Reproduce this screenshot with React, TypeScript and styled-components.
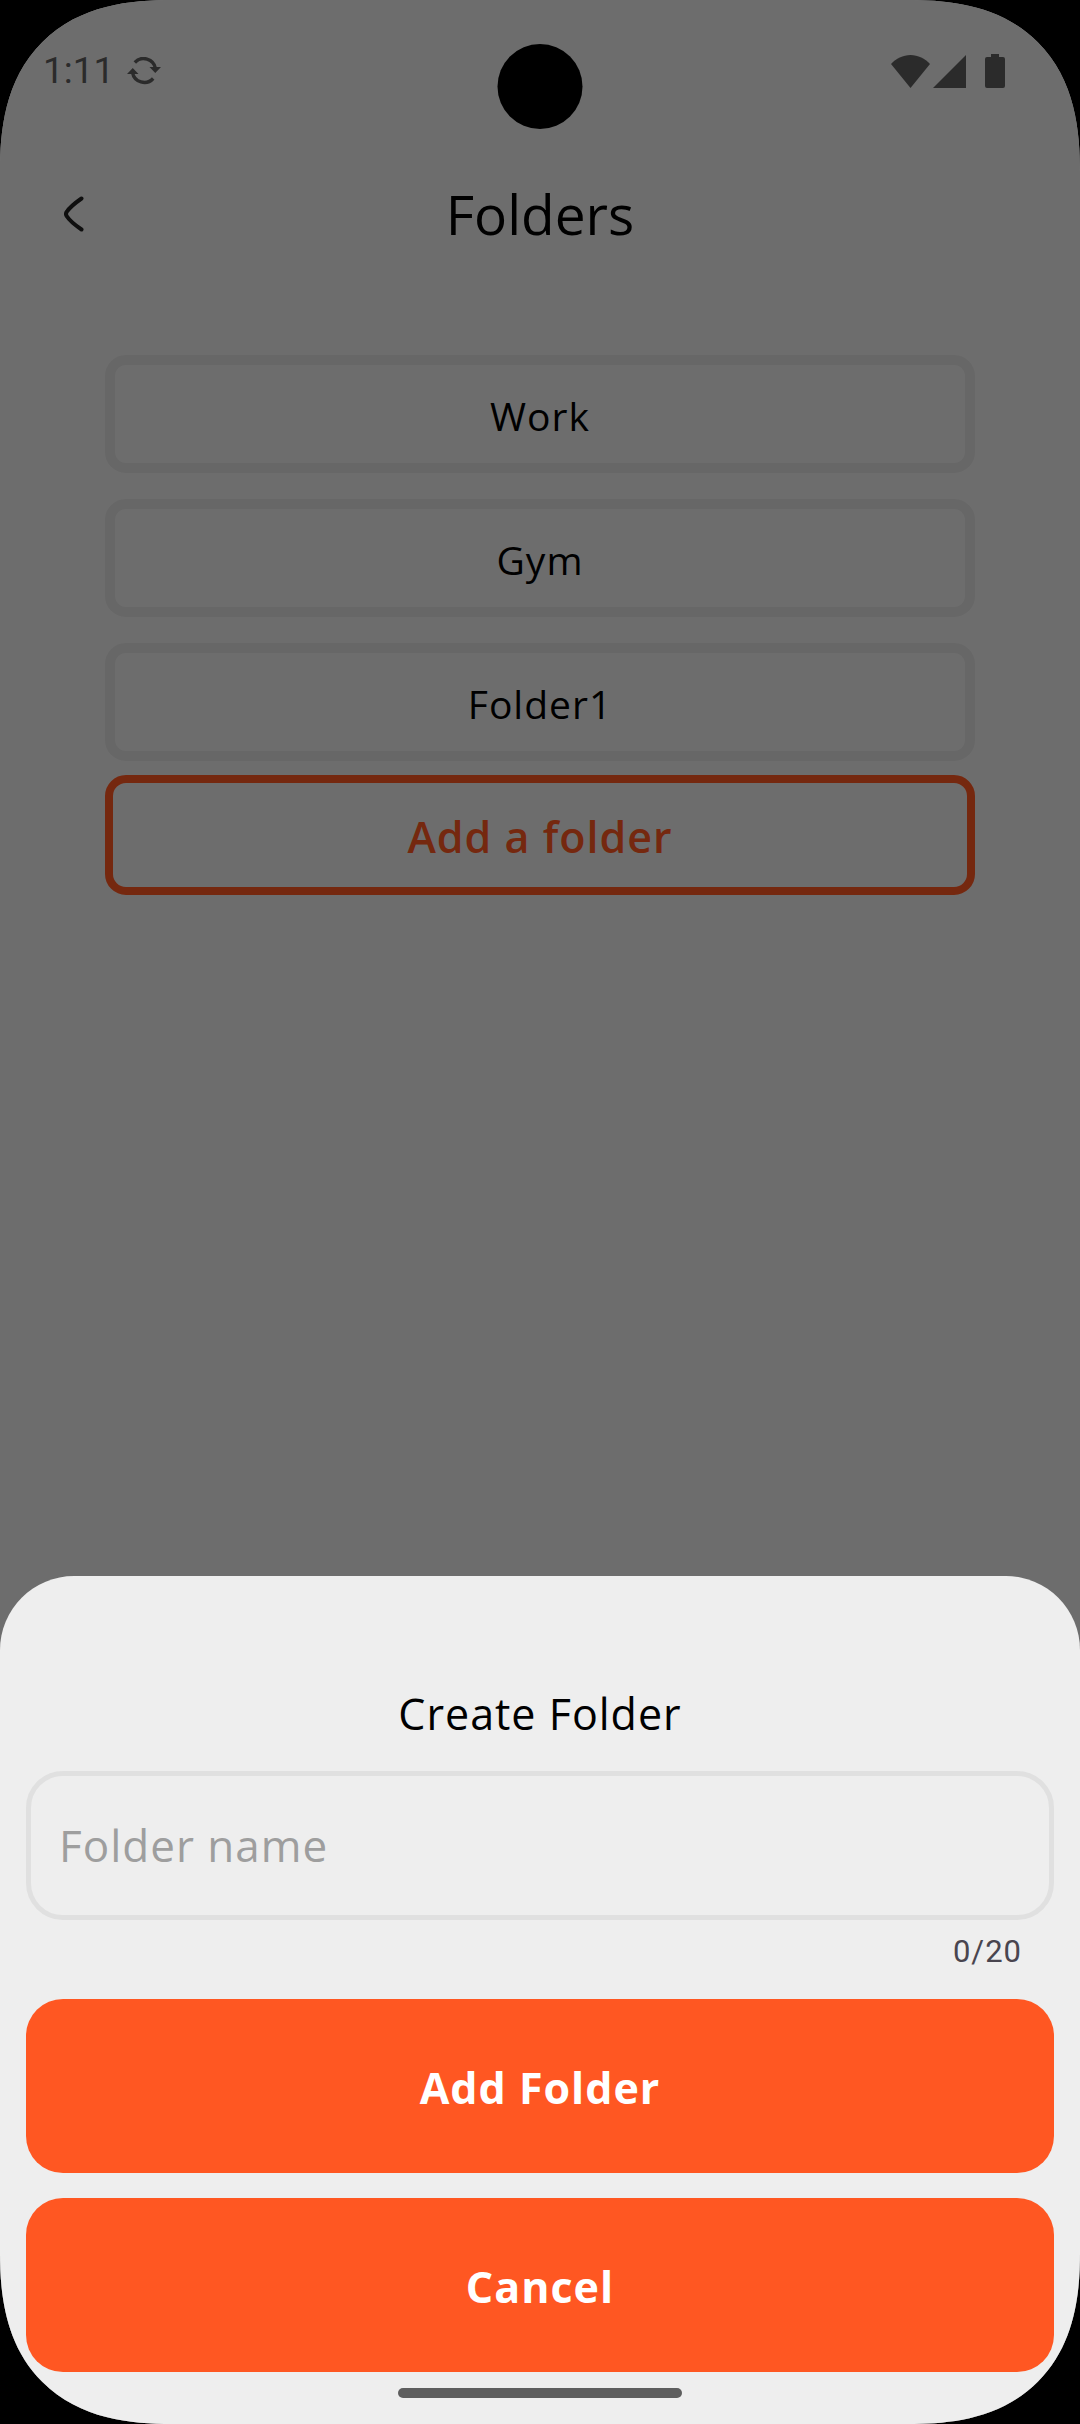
import React, { useState } from "react";
import styled, { createGlobalStyle } from "styled-components";

const ink = "#5e5e5e";
const accent = "#ff5722";
const surface = "#eeeeee";
const outline = "#e0e0e0";
const uiFont = `"Open Sans", "Noto Sans", sans-serif`;
const systemFont = `Roboto, "Noto Sans", sans-serif`;

const GlobalStyle = createGlobalStyle`
  *, *::before, *::after { box-sizing: border-box; }
  body { margin: 0; background: #000; }
  button, input { font: inherit; color: inherit; margin: 0; }
`;

const Screen = styled.div`
  position: relative;
  display: flex;
  flex-direction: column;
  min-height: 100vh;
  overflow: hidden;
  border-radius: 147px;
  background: ${surface};
  color: #000;
  font-family: ${uiFont};

  @supports (corner-shape: superellipse(1.3)) {
    border-radius: 172px;
    corner-shape: superellipse(1.3);
  }
`;

const StatusBar = styled.header`
  display: flex;
  justify-content: space-between;
  align-items: center;
  height: 142px;
  padding: 0 75px 0 43px;
  color: ${ink};
`;

const StatusGroup = styled.div<{ $gap: number }>`
  display: flex;
  align-items: center;
  gap: ${(p) => p.$gap}px;
`;

const Clock = styled.time`
  font-family: ${systemFont};
  font-size: 37px;
  line-height: 44px;
`;

const Camera = styled.div`
  position: absolute;
  top: 44px;
  left: 50%;
  width: 85px;
  height: 85px;
  border-radius: 50%;
  background: #000;
  transform: translateX(-50%);
`;

const TitleBar = styled.div`
  display: grid;
  grid-template-columns: 84px 1fr 84px;
  align-items: center;
  height: 144px;
  padding: 0 32px;
`;

const BackButton = styled.button`
  display: flex;
  align-items: center;
  justify-content: center;
  height: 84px;
  padding: 0;
  border: 0;
  background: none;
  color: #212121;
`;

const Title = styled.h1`
  margin: 0;
  font-size: 55px;
  font-weight: 400;
  line-height: 76px;
  text-align: center;
`;

const FolderList = styled.ul`
  display: flex;
  flex-direction: column;
  gap: 26px;
  margin: 0;
  padding: 69px 105px 14px;
  list-style: none;
`;

const FolderButton = styled.button`
  display: block;
  width: 100%;
  height: 118px;
  padding: 2px 0 0;
  border: 10px solid ${outline};
  border-radius: 21px;
  background: none;
  font-size: 39px;
  letter-spacing: 1px;
`;

const ListFooter = styled.div`
  padding: 0 105px;
`;

const AddButton = styled.button`
  display: block;
  width: 100%;
  height: 120px;
  padding: 2px 0 0;
  border: 8px solid ${accent};
  border-radius: 21px;
  background: none;
  color: ${accent};
  font-size: 43px;
  font-weight: 600;
  letter-spacing: 1px;
`;

const Scrim = styled.div`
  position: absolute;
  inset: 0;
  display: flex;
  flex-direction: column;
  justify-content: flex-end;
  background: rgba(0, 0, 0, 0.54);
`;

const Sheet = styled.form`
  display: flex;
  flex-direction: column;
  padding: 108px 26px 26px;
  border-radius: 74px 74px 0 0;
  background: ${surface};
`;

const SheetTitle = styled.h2`
  margin: 0 0 27px;
  font-size: 43px;
  font-weight: 400;
  line-height: 60px;
  letter-spacing: 1px;
  text-align: center;
`;

const NameInput = styled.input`
  width: 100%;
  height: 149px;
  padding: 0 28px 2px;
  border: 5px solid ${outline};
  border-radius: 37px;
  outline: none;
  background: none;
  font-size: 44px;
  letter-spacing: 1px;

  &::placeholder {
    color: #9e9e9e;
    opacity: 1;
  }
`;

const Counter = styled.output`
  margin: 11px 0 26px;
  padding-right: 32px;
  color: #49454f;
  font-family: ${systemFont};
  font-size: 31px;
  line-height: 42px;
  letter-spacing: 1px;
  text-align: right;
`;

const Actions = styled.div`
  display: flex;
  flex-direction: column;
  gap: 25px;
`;

const ActionButton = styled.button`
  height: 174px;
  padding: 2px 0 0;
  border: 0;
  border-radius: 37px;
  background: ${accent};
  color: #fff;
  font-size: 43px;
  font-weight: 700;
  letter-spacing: 1px;
`;

const HomeHandle = styled.div`
  align-self: center;
  width: 284px;
  height: 10px;
  margin-top: 16px;
  border-radius: 5px;
  background: ${ink};
`;

const SyncIcon = () => (
  <svg width="34" height="28" viewBox="0 0 34 28" fill="none" aria-hidden="true">
    <path d="M7.800 5.500A12 12 0 0 1 28.500 11.500" stroke="currentColor" strokeWidth="3.400" />
    <path d="M26.200 21.500A12 12 0 0 1 5.500 15.500" stroke="currentColor" strokeWidth="3.400" />
    <path d="M22.500 10H34l-5.750 6zM0 17h11.500L5.750 11z" fill="currentColor" />
  </svg>
);

const WifiIcon = () => (
  <svg width="39" height="33" viewBox="0 0 39 33" fill="currentColor" aria-hidden="true">
    <path d="M19.500 33 0 9C5 3.500 12 0 19.500 0S34 3.500 39 9z" />
  </svg>
);

const SignalIcon = () => (
  <svg width="33" height="33" viewBox="0 0 33 33" fill="currentColor" aria-hidden="true">
    <path d="M33 0v33H0z" />
  </svg>
);

const BatteryIcon = () => (
  <svg width="20" height="34" viewBox="0 0 20 34" fill="currentColor" aria-hidden="true">
    <path d="M6 0h8v3h4a2 2 0 0 1 2 2v27a2 2 0 0 1-2 2H2a2 2 0 0 1-2-2V5a2 2 0 0 1 2-2h4z" />
  </svg>
);

const BackIcon = () => (
  <svg width="20" height="36" viewBox="0 0 20 36" fill="none" aria-hidden="true">
    <path
      d="M17.500 2.500C12.500 6 5.500 11.500 2.800 15.800Q1.200 18 2.800 20.200C5.500 24.500 12.500 30 17.500 33.500"
      stroke="currentColor"
      strokeWidth="4"
      strokeLinecap="round"
      strokeLinejoin="round"
    />
  </svg>
);

const folders = ["Work", "Gym", "Folder1"];
const maxLength = 20;

export default function App() {
  const [name, setName] = useState("");

  return (
    <>
      <GlobalStyle />
      <Screen>
        <StatusBar>
          <StatusGroup $gap={13}>
            <Clock>1:11</Clock>
            <SyncIcon />
          </StatusGroup>
          <StatusGroup $gap={19}>
            <StatusGroup $gap={3}>
              <WifiIcon />
              <SignalIcon />
            </StatusGroup>
            <BatteryIcon />
          </StatusGroup>
        </StatusBar>
        <TitleBar>
          <BackButton type="button" aria-label="Back">
            <BackIcon />
          </BackButton>
          <Title>Folders</Title>
        </TitleBar>
        <FolderList>
          {folders.map((folder) => (
            <li key={folder}>
              <FolderButton type="button">{folder}</FolderButton>
            </li>
          ))}
        </FolderList>
        <ListFooter>
          <AddButton type="button">Add a folder</AddButton>
        </ListFooter>
        <Scrim>
          <Sheet onSubmit={(e) => e.preventDefault()}>
            <SheetTitle id="sheet-title">Create Folder</SheetTitle>
            <NameInput
              id="folder-name"
              aria-labelledby="sheet-title"
              placeholder="Folder name"
              maxLength={maxLength}
              value={name}
              onChange={(e) => setName(e.target.value)}
            />
            <Counter htmlFor="folder-name">{`${name.length}/${maxLength}`}</Counter>
            <Actions>
              <ActionButton type="submit">Add Folder</ActionButton>
              <ActionButton type="button">Cancel</ActionButton>
            </Actions>
            <HomeHandle />
          </Sheet>
        </Scrim>
        <Camera />
      </Screen>
    </>
  );
}
